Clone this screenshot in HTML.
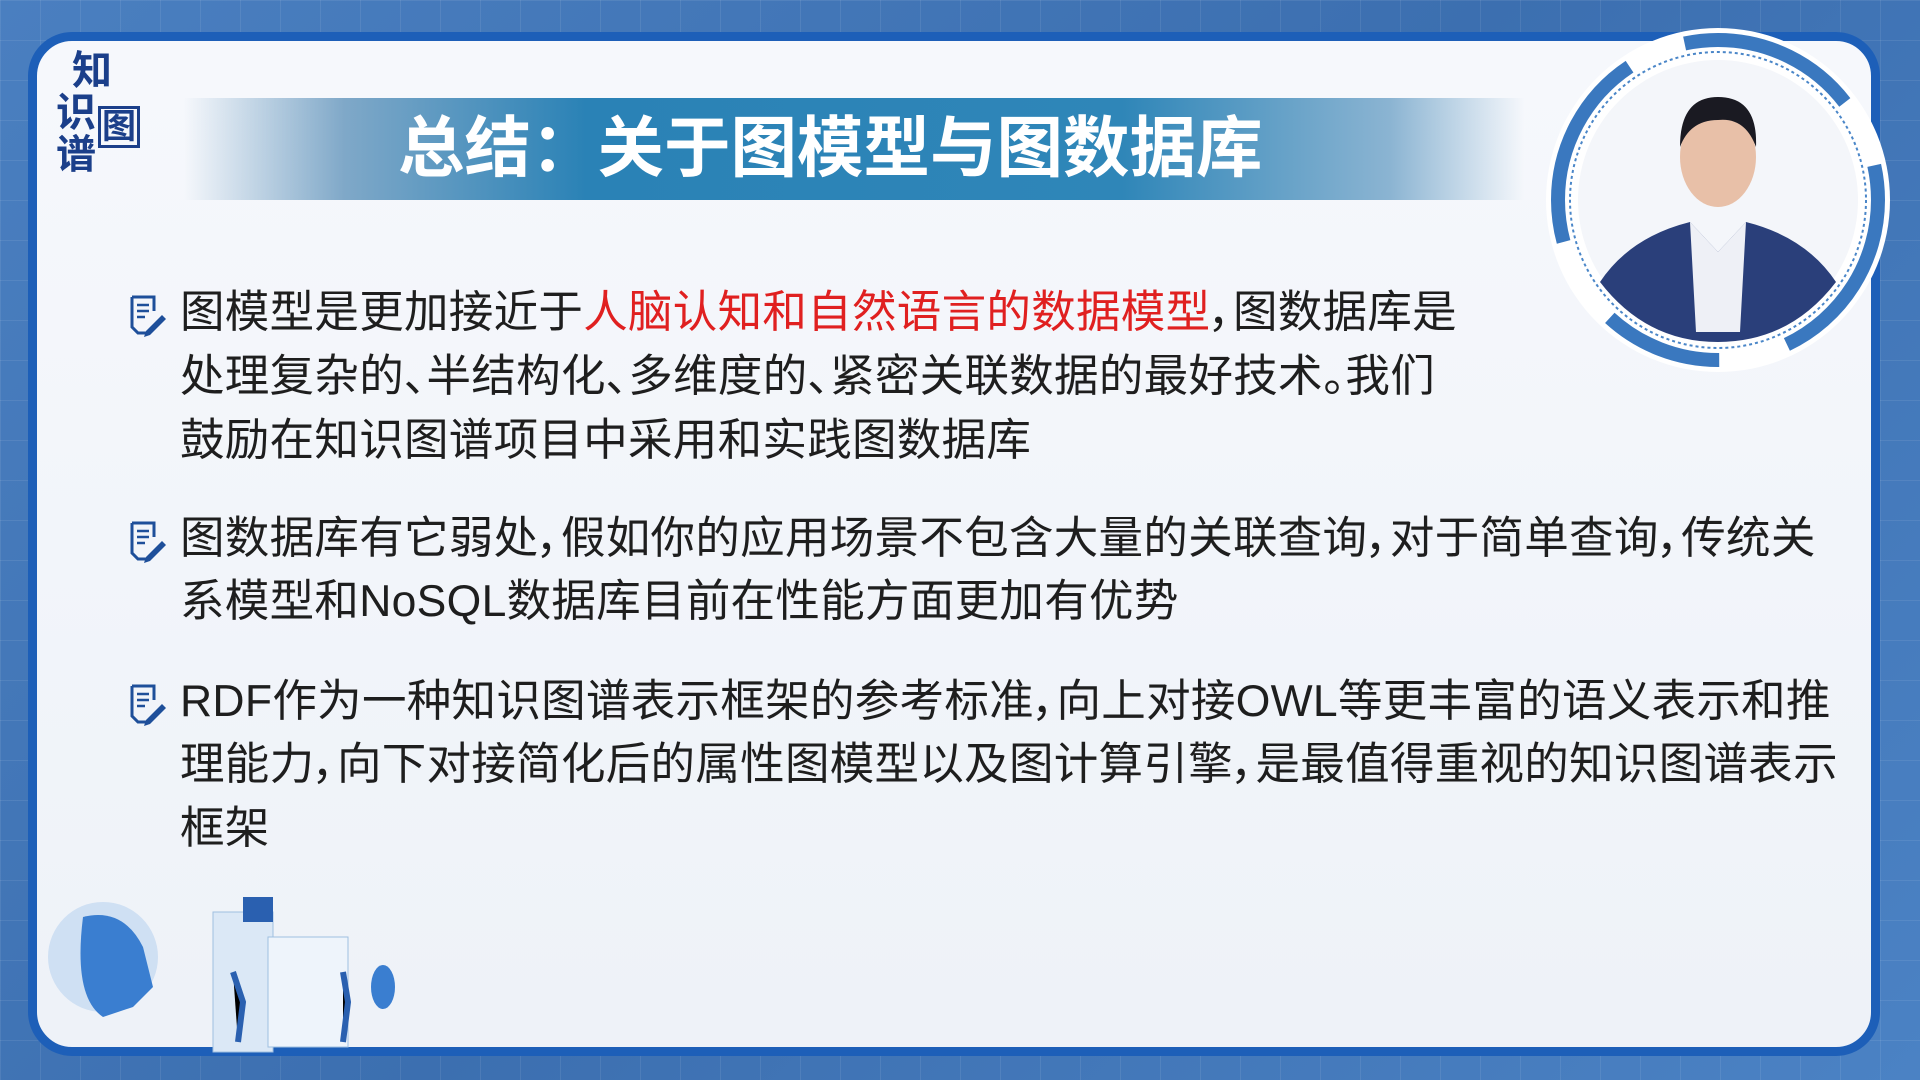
<!DOCTYPE html>
<html><head><meta charset="utf-8"><style>
html,body{margin:0;padding:0;width:1920px;height:1080px;overflow:hidden}
body{background:linear-gradient(135deg,#4a7fc0 0%,#3c6fb0 50%,#4b82c4 100%);position:relative;font-family:"Liberation Sans","Noto Sans CJK SC",sans-serif}
.grid{position:absolute;inset:0;background-image:linear-gradient(rgba(255,255,255,.08) 1px,transparent 1px),linear-gradient(90deg,rgba(255,255,255,.08) 1px,transparent 1px);background-size:40px 40px}
.panel{position:absolute;left:28px;top:32px;width:1852px;height:1024px;border:9px solid #1d5fb8;border-radius:44px;box-sizing:border-box;background:linear-gradient(180deg,#f6f8fc,#eef2f8)}
.logo{position:absolute;font-weight:bold;color:#1b3f8a;font-size:40px;line-height:42px}
.banner{position:absolute;left:184px;top:98px;width:1340px;height:102px;background:linear-gradient(90deg,rgba(240,244,250,0) 0%,#7fa8c8 12%,#2a82b6 30%,#2f86b8 70%,#8bb4d2 90%,rgba(240,244,250,0) 100%)}
.title{position:absolute;left:398px;top:104px;font-size:66.5px;font-weight:bold;color:#fff;white-space:nowrap;line-height:90px}
.t{position:absolute;left:180px;font-size:44.5px;color:#1e1e1e;white-space:nowrap;line-height:64px;letter-spacing:0.3px;font-feature-settings:"palt"}
.r{color:#e02020}
.ic{position:absolute;left:128px;width:40px;height:44px}
</style></head><body>
<div class="grid"></div>
<div class="panel"></div>
<div class="logo" style="left:72px;top:50px">知</div>
<div class="logo" style="left:56px;top:92px">识</div>
<div class="logo" style="left:98px;top:106px;border:3px solid #1b3f8a;font-size:34px;line-height:36px;padding:0 1px">图</div>
<div class="logo" style="left:56px;top:134px">谱</div>
<div class="banner"></div>
<div class="title">总结：关于图模型与图数据库</div>

<svg class="ic" style="top:293px" viewBox="0 0 40 44"><path d="M4 4h22v14M4 4v30l6 6h8" fill="none" stroke="#1e4f9a" stroke-width="3"/><path d="M9 12h12M9 18h12M9 24h8" stroke="#1e4f9a" stroke-width="2.5"/><path d="M18 38l16-16 4 4-16 16-6 2z" fill="#1e4f9a"/></svg>
<div class="t" style="top:281px">图模型是更加接近于<span class="r">人脑认知和自然语言的数据模型</span>，图数据库是</div>
<div class="t" style="top:345px">处理复杂的、半结构化、多维度的、紧密关联数据的最好技术。我们</div>
<div class="t" style="top:409px">鼓励在知识图谱项目中采用和实践图数据库</div>

<svg class="ic" style="top:519px" viewBox="0 0 40 44"><path d="M4 4h22v14M4 4v30l6 6h8" fill="none" stroke="#1e4f9a" stroke-width="3"/><path d="M9 12h12M9 18h12M9 24h8" stroke="#1e4f9a" stroke-width="2.5"/><path d="M18 38l16-16 4 4-16 16-6 2z" fill="#1e4f9a"/></svg>
<div class="t" style="top:507px">图数据库有它弱处，假如你的应用场景不包含大量的关联查询，对于简单查询，传统关</div>
<div class="t" style="top:570px">系模型和NoSQL数据库目前在性能方面更加有优势</div>

<svg class="ic" style="top:682px" viewBox="0 0 40 44"><path d="M4 4h22v14M4 4v30l6 6h8" fill="none" stroke="#1e4f9a" stroke-width="3"/><path d="M9 12h12M9 18h12M9 24h8" stroke="#1e4f9a" stroke-width="2.5"/><path d="M18 38l16-16 4 4-16 16-6 2z" fill="#1e4f9a"/></svg>
<div class="t" style="top:670px">RDF作为一种知识图谱表示框架的参考标准，向上对接OWL等更丰富的语义表示和推</div>
<div class="t" style="top:733px">理能力，向下对接简化后的属性图模型以及图计算引擎，是最值得重视的知识图谱表示</div>
<div class="t" style="top:797px">框架</div>

<svg style="position:absolute;left:1540px;top:22px" width="360" height="360" viewBox="0 0 360 360">
<circle cx="178" cy="178" r="172" fill="#fff"/>
<circle cx="178" cy="178" r="160" fill="none" stroke="#3a78bf" stroke-width="14" stroke-dasharray="180 70 120 90 200 60"/>
<circle cx="178" cy="178" r="148" fill="none" stroke="#4a86c8" stroke-width="2" stroke-dasharray="3 3"/>
<circle cx="178" cy="178" r="140" fill="#f4f6fa"/>
<path d="M60 260 Q90 215 150 200 L178 230 L206 200 Q266 215 296 260 Q250 320 178 320 Q106 320 60 260Z" fill="#2a3f7a"/>
<path d="M150 200 L178 230 L206 200 L200 310 L156 310Z" fill="#eef0f6"/>
<ellipse cx="178" cy="135" rx="38" ry="50" fill="#e8c0a8"/>
<path d="M140 125 Q140 75 178 75 Q218 75 216 125 Q205 95 178 98 Q150 98 140 125Z" fill="#1a1a22"/>
</svg>

<svg style="position:absolute;left:43px;top:857px" width="360" height="200" viewBox="0 0 360 200">
<circle cx="60" cy="100" r="55" fill="#cfe0f3"/>
<path d="M40 60 Q80 50 100 90 L110 130 L90 150 L60 160 Q30 140 40 60Z" fill="#3a7ed0"/>
<rect x="170" y="55" width="60" height="140" fill="#dbe8f6" stroke="#9fbfe0"/>
<rect x="225" y="80" width="80" height="110" fill="#eef4fb" stroke="#9fbfe0"/>
<rect x="200" y="40" width="30" height="25" fill="#2a60b0"/>
<path d="M190 115 l10 30 l-5 40" stroke="#2a60b0" stroke-width="6"/>
<path d="M300 115 l5 30 l-5 40" stroke="#2a60b0" stroke-width="6"/>
<ellipse cx="340" cy="130" rx="12" ry="22" fill="#3a7ed0"/>
</svg>
</body></html>
